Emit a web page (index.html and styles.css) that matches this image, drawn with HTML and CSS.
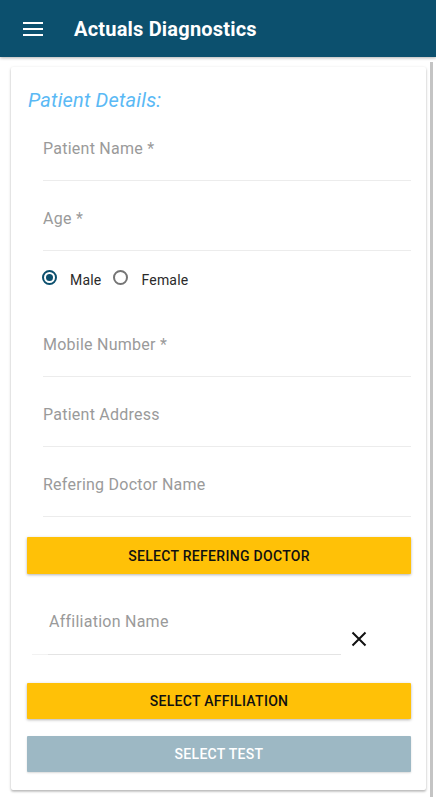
FILE: index.html
```html
<!DOCTYPE html>
<html>
<head>
<meta charset="utf-8">
<link rel="stylesheet" href="styles.css">
</head>
<body>
<header class="appbar">
  <svg class="menu" width="20" height="14" viewBox="0 0 20 14"><rect x="0" y="0" width="20" height="2" fill="#fff"/><rect x="0" y="6" width="20" height="2" fill="#fff"/><rect x="0" y="12" width="20" height="2" fill="#fff"/></svg>
  <h1 class="title">Actuals Diagnostics</h1>
</header>
<div class="page">
  <main class="card">
    <h2 class="section">Patient Details:</h2>
    <div class="field"><span class="label">Patient Name *</span></div>
    <div class="field"><span class="label">Age *</span></div>
    <div class="radios">
      <label class="radio"><span class="dot on"></span>Male</label>
      <label class="radio"><span class="dot"></span>Female</label>
    </div>
    <div class="field"><span class="label">Mobile Number *</span></div>
    <div class="field"><span class="label">Patient Address</span></div>
    <div class="field"><span class="label">Refering Doctor Name</span></div>
    <button class="btn amber first">SELECT REFERING DOCTOR</button>
    <div class="affrow">
      <div class="afffield"><span class="label">Affiliation Name</span></div>
      <svg class="close" width="16" height="16" viewBox="0 0 16 16"><path d="M1.5 1.5 L14.5 14.5 M14.5 1.5 L1.5 14.5" stroke="#111" stroke-width="2" fill="none"/></svg>
    </div>
    <button class="btn amber second">SELECT AFFILIATION</button>
    <button class="btn disabled">SELECT TEST</button>
  </main>
  <div class="scrollbar"></div>
</div>
</body>
</html>
```
FILE: styles.css
```css
* { box-sizing: border-box; }
body {
  margin: 0;
  font-family: Roboto, "Noto Sans", sans-serif;
  background: #fff;
  width: 436px;
  height: 800px;
  overflow: hidden;
}
.appbar {
  height: 57px;
  background: #0c506e;
  display: flex;
  align-items: center;
  padding-left: 23px;
  box-shadow: 0 1px 3px rgba(0,0,0,0.3);
  position: relative;
  z-index: 2;
}
.menu { display: block; margin-top: 0; }
.title {
  margin: 1px 0 0 31px;
  color: #fff;
  font-size: 20px;
  font-weight: 700;
  letter-spacing: 0.2px;
}
.page {
  display: flex;
  padding: 10px 3px 0 11px;
}
.card {
  flex: 1;
  height: 723px;
  padding: 21px 15px 18px 16px;
  background: #fff;
  box-shadow: 0 1px 3px rgba(0,0,0,0.22), 0 2px 2px rgba(0,0,0,0.12);
  border-radius: 2px;
}
.scrollbar {
  width: 3px;
  margin-left: 4px;
  margin-top: -5px;
  height: 735px;
  background: #c4c4c4;
}
.section {
  margin: 0;
  font-size: 20px;
  line-height: 24px;
  height: 23px;
  font-style: italic;
  font-weight: 400;
  color: #5ab9f5;
  padding-left: 1px;
  letter-spacing: 0.2px;
}
.field {
  margin-left: 16px;
  height: 70px;
  padding-top: 28px;
  border-bottom: 1px solid #ececec;
}
.label {
  display: block;
  font-size: 16px;
  line-height: 20px;
  color: #9a9a9a;
  letter-spacing: 0.25px;
}
.radios {
  height: 56px;
  margin-left: 15px;
  display: flex;
  align-items: center;
  gap: 12px;
  padding-top: 1px;
}
.radio {
  display: flex;
  align-items: center;
  font-size: 14px;
  color: #2a2a2a;
  letter-spacing: 0.2px;
}
.dot {
  width: 15px;
  height: 15px;
  border-radius: 50%;
  border: 2px solid #757575;
  margin-right: 13px;
  margin-top: -4px;
  position: relative;
}
.dot.on { border-color: #0c506e; }
.dot.on::after {
  content: "";
  position: absolute;
  left: 2px;
  top: 2px;
  width: 7px;
  height: 7px;
  border-radius: 50%;
  background: #0c506e;
}
.btn {
  display: block;
  width: 100%;
  border: 0;
  font-family: Roboto, "Noto Sans", sans-serif;
  font-size: 14px;
  font-weight: 500;
  letter-spacing: 0.3px;
  border-radius: 1px;
}
.amber {
  background: #ffc107;
  color: #111;
  box-shadow: 0 1px 3px rgba(0,0,0,0.3);
}
.first { height: 37px; margin-top: 20px; }
.second { height: 36px; margin-top: 28px; }
.disabled {
  height: 36px;
  margin-top: 17px;
  background: #9db8c4;
  color: #fff;
  box-shadow: 0 1px 2px rgba(0,0,0,0.15);
}
.affrow {
  display: flex;
  align-items: flex-end;
  margin-top: 10px;
  margin-left: 5px;
}
.afffield {
  width: 309px;
  height: 71px;
  padding-top: 28px;
  padding-left: 17px;
  border-bottom: 1px solid #e4e4e4;
  position: relative;
}
.afffield::before {
  content: "";
  position: absolute;
  left: 0;
  bottom: -1px;
  width: 16px;
  height: 1px;
  background: #f2f2f2;
}
.close { margin-left: 10px; margin-bottom: 8px; }
```
